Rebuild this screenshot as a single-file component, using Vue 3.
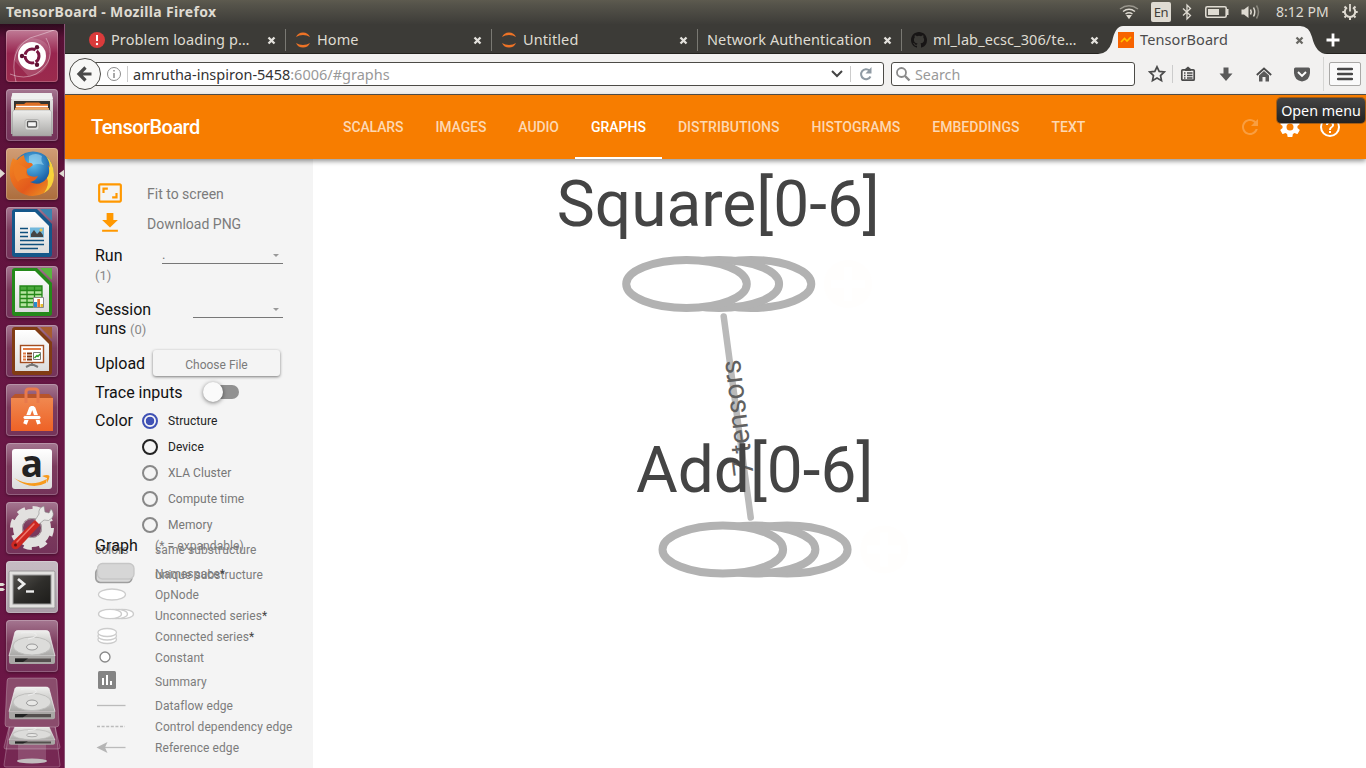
<script setup>
const tabs = [
  { label: 'Problem loading p…', icon: 'error', w: 207 },
  { label: 'Home', icon: 'jupyter', w: 206 },
  { label: 'Untitled', icon: 'jupyter', w: 206 },
  { label: 'Network Authentication', icon: '', w: 204 },
  { label: 'ml_lab_ecsc_306/te…', icon: 'github', w: 209 },
]
const nav = ['SCALARS', 'IMAGES', 'AUDIO', 'GRAPHS', 'DISTRIBUTIONS', 'HISTOGRAMS', 'EMBEDDINGS', 'TEXT']
const radios = [
  { label: 'Structure', state: 'on' },
  { label: 'Device', state: 'enabled' },
  { label: 'XLA Cluster', state: '' },
  { label: 'Compute time', state: '' },
  { label: 'Memory', state: '' },
]
const legend = [
  { label: 'Namespace', star: true, kind: 'ns' },
  { label: 'OpNode', kind: 'op' },
  { label: 'Unconnected series', star: true, kind: 'useries' },
  { label: 'Connected series', star: true, kind: 'cseries' },
  { label: 'Constant', kind: 'const' },
  { label: 'Summary', kind: 'summary' },
  { label: 'Dataflow edge', kind: 'flow' },
  { label: 'Control dependency edge', kind: 'control' },
  { label: 'Reference edge', kind: 'ref' },
]
const nodes = [
  { x: 686.5, y: 284 },
  { x: 722.8, y: 549.5 },
]
</script>

<template>
  <div class="desktop">
    <svg class="defs" width="0" height="0">
      <defs>
        <linearGradient id="silver" x1="0" y1="0" x2="0" y2="1"><stop offset="0" stop-color="#efefed" /><stop offset="1" stop-color="#a8a7a5" /></linearGradient>
        <linearGradient id="paper" x1="0" y1="0" x2="0" y2="1"><stop offset="0" stop-color="#fff" /><stop offset="1" stop-color="#dcdcdc" /></linearGradient>
        <linearGradient id="bag" x1="0" y1="0" x2="0" y2="1"><stop offset="0" stop-color="#f08850" /><stop offset="1" stop-color="#ee6226" /></linearGradient>
        <linearGradient id="fox" x1="0" y1="0" x2="1" y2="1"><stop offset="0" stop-color="#f48a22" /><stop offset=".6" stop-color="#e35a1c" /><stop offset="1" stop-color="#f0a125" /></linearGradient>
        <radialGradient id="globe" cx=".5" cy=".3" r=".7"><stop offset="0" stop-color="#5fc0ee" /><stop offset=".6" stop-color="#1f69ad" /><stop offset="1" stop-color="#123b78" /></radialGradient>
        <linearGradient id="term" x1="0" y1="0" x2="1" y2="1"><stop offset="0" stop-color="#55534f" /><stop offset=".5" stop-color="#2f2e2b" /><stop offset="1" stop-color="#1d1c1a" /></linearGradient>
        <g id="disk">
          <path d="M9 12Q9.500 10.500 12 10.500H40Q42.500 10.500 43 12L49 36H3Z" fill="url(#silver)" stroke="#f5f5f5" stroke-width=".7" />
          <path d="M3 36H49V42Q49 44 47 44H5Q3 44 3 42Z" fill="#a9a7a5" />
          <path d="M9 38.500H45V42H9Z" fill="#55504f" /><path d="M9 38.500H22L17 42H9Z" fill="#222" />
          <ellipse cx="26" cy="26" rx="19" ry="9" fill="#dcdcda" stroke="#bdbdbb" />
          <path d="M15 13Q25 11 30 14Q32 17 22 19" fill="none" stroke="#eee" />
          <ellipse cx="26" cy="27" rx="5.500" ry="3" fill="#e8e8e6" stroke="#999" />
        </g>
      </defs>
    </svg>

    <header class="panel">
      <span class="window-title">TensorBoard - Mozilla Firefox</span>
      <div class="indicators">
        <svg width="20" height="24" viewBox="0 0 20 24" fill="none" stroke="#dfdbd2" stroke-width="1.500">
          <path d="M1 9Q10 2.500 19 9" stroke="#99968d" /><path d="M4 11.500Q10 7 16 11.500M6.500 14Q10 11.500 13.500 14" /><path d="M8.500 15.800L10 18L11.500 15.800Z" fill="#dfdbd2" />
        </svg>
        <span class="lang">En</span>
        <svg class="bt" width="10" height="24" viewBox="0 0 10 24" fill="none" stroke="#dfdbd2" stroke-width="1.300"><path d="M1 8.500L8.500 15.500L5 19V5L8.500 8.500L1 15.500" /></svg>
        <svg class="bat" width="24" height="24" viewBox="0 0 24 24"><rect x=".8" y="6.800" width="20.400" height="10.400" rx="1.500" fill="none" stroke="#dfdbd2" stroke-width="1.600" /><path d="M3 9H14V15H3Z" fill="#dfdbd2" /><path d="M22 9H23.500V15H22Z" fill="#dfdbd2" /></svg>
        <svg class="vol" width="20" height="24" viewBox="0 0 20 24" fill="none" stroke="#dfdbd2" stroke-width="1.500"><path d="M.5 9.500H3L7.500 6V18L3 14.500H.5Z" fill="#dfdbd2" stroke="none" /><path d="M9.500 9.500Q11 12 9.500 14.500M12.500 7.500Q15 12 12.500 16.500" /><path d="M15.500 5.500Q19.500 12 15.500 18.500" stroke="#8a877e" /></svg>
        <span class="clock">8:12 PM</span>
        <svg class="cog" width="16" height="24" viewBox="0 0 16 24" fill="none" stroke="#dfdbd2"><path d="M5 7.500A5.200 5.200 0 1 0 11 7.500" stroke-width="2" /><path d="M8 4V11.500" stroke-width="1.800" /><path d="M.3 12H2.500M13.500 12H15.700M2.500 6.500L4 8M13.500 6.500L12 8M2.500 17.500L4 16M13.500 17.500L12 16M8 17.500V20" stroke-width="2" /></svg>
      </div>
    </header>

    <div class="work">
      <aside class="launcher">
        <div class="tile dash">
          <svg viewBox="0 0 52 52"><path d="M10 52Q2 20 24 8Q40 3 48 0M40 8Q52 30 30 44Q18 50 4 44" fill="none" stroke="#fff" stroke-opacity=".4" stroke-width="1" /><path d="M8 30Q8 12 26 8Q46 10 44 28Q40 46 22 46Z" fill="#fff" fill-opacity=".15" /><circle cx="26" cy="26" r="14" fill="#fff" /><circle cx="26" cy="26" r="7" fill="none" stroke="#7a1742" stroke-width="3" stroke-dasharray="13.160 1.500" stroke-dashoffset="6" /><circle cx="16" cy="26" r="2.200" fill="#5c1031" /><circle cx="31" cy="17.300" r="2.200" fill="#5c1031" /><circle cx="31" cy="34.700" r="2.200" fill="#5c1031" /></svg>
        </div>
        <div class="tile">
          <svg viewBox="0 0 52 52"><path d="M6.500 4H45.500L47 12V45H5V12Z" fill="url(#silver)" /><path d="M6.500 4H45.500L47 10H5Z" fill="#efefee" /><path d="M8 12H44V24H8Z" fill="#35342f" /><path d="M10 15H18L20 13.500H33L35 15H42V23H9Z" fill="#df7126" /><path d="M10 16.800H42V18.300H10Z" fill="#fff" /><path d="M9 19H43V22H9Z" fill="#edaa66" /><path d="M8 21H44L45.500 23V47H6.500V23Z" fill="url(#silver)" stroke="#999" stroke-width=".5" /><rect x="19" y="30.500" width="14" height="10.500" rx="2" fill="#e0e0de" stroke="#b4b4b2" /><rect x="21.500" y="32.500" width="9" height="5.500" rx="1" fill="#f5f5f5" stroke="#555" stroke-width="1.300" /></svg>
        </div>
        <div class="tile firefox">
          <svg viewBox="0 0 52 52"><circle cx="27" cy="24" r="20.500" fill="url(#globe)" /><path d="M23 8Q30 4 36 8Q34 13 38 17Q28 14 23 20Z" fill="#a2d8f2" opacity=".6" /><path d="M7 10Q9 12 11 12Q14 8 18 7Q18 12 22 15Q26 14 27 17Q24 20 21 21Q20 24 22 27Q27 30 32 28Q30 33 24 34Q34 39 41 30Q45 23 42 17Q45 19 47 24Q49 38 38 45Q25 52 12 43Q2 34 4 20Q5 14 7 10Z" fill="url(#fox)" /><path d="M40 8Q48 15 48 27Q48 39 38 45Q44 36 41 30Q44 26 43 20Q45 16 40 8Z" fill="#f8d33a" /><path d="M8 17Q12 14 21 21Q18 27 24 30Q14 30 12 34Q6 26 8 17Z" fill="#ef7c20" opacity=".8" /></svg>
        </div>
        <div class="tile">
          <svg viewBox="0 0 52 52"><path d="M9 2H31L46 17V47Q46 50 43 50H9Q6 50 6 47V5Q6 2 9 2Z" fill="#15578a" /><path d="M34 2H46V14Z" fill="#3b83ad" /><path d="M9 5H29L43 19V46H9Z" fill="url(#paper)" /><path d="M14 21.500H22M14 25.500H22M14 29.500H22M14 33.500H38M14 37.500H38M14 41.500H32" stroke="#0e4f7d" stroke-width="1.700" /><path d="M24 20.500H38V30.500H24Z" fill="#72b8dc" /><path d="M25 30V27L28 23L31 27L34 24L37 28V30Z" fill="#444" /><circle cx="35" cy="23" r="1.500" fill="#e9c34d" /></svg>
        </div>
        <div class="tile">
          <svg viewBox="0 0 52 52"><path d="M9 2H31L46 17V47Q46 50 43 50H9Q6 50 6 47V5Q6 2 9 2Z" fill="#25891a" /><path d="M34 2H46V14Z" fill="#59b53f" /><path d="M9 5H29L43 19V46H9Z" fill="url(#paper)" /><path d="M14 20H36V41H14Z" fill="#b6e4a0" /><path d="M14 20H36V24H14Z" fill="#4ba93c" /><path d="M14 20H36V41H14ZM21 20V41M28.500 20V41M14 24.500H36M14 28.500H36M14 32.500H36M14 36.500H36" fill="none" stroke="#248718" stroke-width="1.300" /><path d="M27.500 31.500H37.500V41.500H27.500Z" fill="#fff" stroke="#888" /><path d="M28 36H31V41H28Z" fill="#278cce" /><path d="M31.300 33H34V41H31.300Z" fill="#e9722f" /><path d="M34.500 38H37V41H34.500Z" fill="#e7be30" /></svg>
        </div>
        <div class="tile">
          <svg viewBox="0 0 52 52"><path d="M9 2H31L46 17V47Q46 50 43 50H9Q6 50 6 47V5Q6 2 9 2Z" fill="#813c14" /><path d="M34 2H46V14Z" fill="#a65c2f" /><path d="M9 5H29L43 19V46H9Z" fill="url(#paper)" /><rect x="14.500" y="20.500" width="23" height="17" fill="#fff" stroke="#a34d20" stroke-width="1.400" /><path d="M17 24H35" stroke="#e07b45" stroke-width="2" /><path d="M17 28.500H20M17 31.500H20M17 34.500H20" stroke="#e07b45" stroke-width="2" /><path d="M21 28.500H26M21 31.500H26M21 34.500H26" stroke="#7a3312" stroke-width="2" /><path d="M27.500 27.500H34.500V34.500H27.500Z" fill="#fff" stroke="#777" /><path d="M28.500 33L31 30.500L32 31.500L34 29" fill="none" stroke="#34a02d" stroke-width="1.500" /><path d="M26 38V41M20 42L26 39L32 42" fill="none" stroke="#777" stroke-width="2" /></svg>
        </div>
        <div class="tile">
          <svg viewBox="0 0 52 52"><path d="M5 14H47V47H5Z" fill="url(#bag)" /><path d="M5 14L9 10H43L47 14Z" fill="#b8542b" /><path d="M20 19V8Q20 5 23 5H29Q32 5 32 8V19" fill="none" stroke="#e8794c" stroke-width="3" /><path d="M19 40L25 24H27.500L33 40" fill="none" stroke="#fff" stroke-width="3.800" stroke-linejoin="bevel" /><rect x="17" y="31.500" width="18" height="4" rx="2" fill="#fff" stroke="#ed6b32" stroke-width=".8" /></svg>
        </div>
        <div class="tile">
          <svg viewBox="0 0 52 52"><rect x="6" y="6" width="40" height="40" rx="3" fill="url(#paper)" /><text class="amazon-a" x="26" y="33.500" text-anchor="middle">a</text><path d="M8 35Q25 45 41 36L40 40Q25 48 8 35Z" fill="#f79a1c" /><path d="M36 33Q42 31 43.500 33Q43.500 36 41 40Q41 37 41 35Q38 34 36 33Z" fill="#f79a1c" /></svg>
        </div>
        <div class="tile">
          <svg viewBox="0 0 52 52"><circle cx="26" cy="26" r="14.500" fill="none" stroke="#e2e1df" stroke-width="9" /><circle cx="26" cy="26" r="19.500" fill="none" stroke="#e2e1df" stroke-width="5" stroke-dasharray="8 7.310" /><circle cx="26" cy="26" r="9.500" fill="none" stroke="#aaa8a6" /><path d="M33 12Q32 6 38 4L39 10L43 11L45 7Q49 11 46 16Q43 20 38 18L32 23L28 20Z" fill="#e9e9e7" stroke="#888" stroke-width=".6" /><path d="M29 18L34 23L13.500 45Q10 49 6.500 46Q3.500 42.500 7.500 39Z" fill="#cd2822" /><path d="M28 22L11 40" stroke="#ee776c" stroke-width="1.600" stroke-linecap="round" /><circle cx="9.500" cy="43" r="1.500" fill="#5e1210" /></svg>
        </div>
        <div class="tile terminal">
          <svg viewBox="0 0 52 52"><rect x="3" y="10" width="46" height="37" rx="1.500" fill="#e2e1df" stroke="#989697" /><rect x="7" y="14" width="38" height="29" fill="url(#term)" stroke="#999" /><path d="M12 18L18 23L12 28" fill="none" stroke="#eee" stroke-width="2.800" /><path d="M20 30.500H28" stroke="#eee" stroke-width="2.400" /></svg>
        </div>
        <div class="tile"><svg viewBox="0 0 52 52"><use href="#disk" /></svg></div>
        <svg class="folded" viewBox="0 0 65 91" width="65" height="91">
          <path d="M10 47H55L60 88Q60 90 58 90H6Q4 90 4 88Z" fill="#fff" fill-opacity=".08" stroke="#fff" stroke-opacity=".25" /><path d="M18 66H46V83H18Z" fill="#fff" fill-opacity=".16" /><ellipse cx="32" cy="84" rx="15" ry="2.500" fill="#c2bcbe" />
          <path d="M10 46H54L60 70Q60 72 58 72H6Q4 72 4 70Z" fill="#fff" fill-opacity=".12" stroke="#fff" stroke-opacity=".25" />
          <g transform="translate(6 43) scale(1 .56)"><use href="#disk" /></g>
          <path d="M10 1H54Q57 1 57 4L59 47Q59 50 56 50H8Q5 50 5 47L7 4Q7 1 10 1Z" fill="#8a4c6c" stroke="#fff" stroke-opacity=".25" />
          <g transform="translate(6 0) scale(1 .96)"><use href="#disk" /></g>
        </svg>
        <svg class="marks" width="65" height="744" viewBox="0 24 65 744" fill="#dfdbd2"><path d="M0 169L5 173.500L0 178ZM65 169L59 173.500L65 178Z" /><path d="M0 583H3L5 584.500L3 586H0ZM0 588H3L5 589.500L3 591H0Z" /></svg>
      </aside>

      <section class="browser">
        <div class="tabstrip">
          <div v-for="t in tabs" :key="t.label" class="tab" :class="{ bare: !t.icon }" :style="{ width: t.w + 'px' }">
            <svg v-if="t.icon === 'error'" width="16" height="16" viewBox="0 0 16 16"><circle cx="8" cy="8" r="8" fill="#da3b3b" /><path d="M8 3V9" stroke="#fff" stroke-width="2" /><circle cx="8" cy="12" r="1.200" fill="#fff" /></svg>
            <svg v-if="t.icon === 'jupyter'" width="16" height="16" viewBox="0 0 16 16" fill="#ee7326"><path d="M1 5Q3 .5 8 .5T15 5Q12 3 8 3T1 5ZM1 11Q3 15.500 8 15.500T15 11Q12 13 8 13T1 11Z" /></svg>
            <svg v-if="t.icon === 'github'" width="16" height="16" viewBox="0 0 16 16" fill="#171515"><path d="M8 0C3.580 0 0 3.580 0 8c0 3.540 2.290 6.530 5.470 7.590.4.070.55-.17.55-.38 0-.19-.01-.82-.01-1.490-2.010.37-2.530-.49-2.690-.94-.09-.23-.48-.94-.82-1.130-.28-.15-.68-.52-.01-.53.63-.01 1.080.58 1.230.82.72 1.210 1.870.87 2.330.66.070-.52.28-.87.51-1.070-1.780-.2-3.640-.89-3.640-3.950 0-.87.31-1.590.82-2.150-.08-.2-.36-1.020.08-2.120 0 0 .67-.21 2.200.82a7.600 7.600 0 0 1 4 0c1.530-1.040 2.200-.82 2.200-.82.44 1.100.16 1.920.08 2.120.51.56.82 1.270.82 2.150 0 3.070-1.870 3.750-3.650 3.950.29.25.54.73.54 1.480 0 1.070-.01 1.930-.01 2.200 0 .21.15.46.55.38A8 8 0 0 0 16 8c0-4.420-3.580-8-8-8Z" /></svg>
            <span class="tab-label">{{ t.label }}</span>
            <svg class="x" width="9" height="9" viewBox="0 0 9 9"><path d="M1.500 1.500L7.500 7.500M7.500 1.500L1.500 7.500" stroke="#e4e2dd" stroke-width="2.300" /></svg>
          </div>
          <div class="active-tab">
            <svg class="tab-shape" width="236" height="30" viewBox="0 0 236 30"><path d="M0 30Q10 30 14 18Q17 2 25 2H202Q211 2 214 13Q218 30 229 30Z" fill="#f2f1f0" /></svg>
            <svg class="tb" width="16" height="16" viewBox="0 0 16 16"><path d="M0 0H16V16H0Z" fill="#f76300" /><path d="M3 10L6.500 6.500L9 9L13 5" fill="none" stroke="#ffc400" stroke-width="1.600" /></svg>
            <span class="tab-label">TensorBoard</span>
            <svg class="x" width="9" height="9" viewBox="0 0 9 9"><path d="M1.500 1.500L7.500 7.500M7.500 1.500L1.500 7.500" stroke="#696863" stroke-width="2.300" /></svg>
          </div>
          <svg class="plus" width="14" height="14" viewBox="0 0 14 14"><path d="M7 .5V13.500M.5 7H13.500" stroke="#fff" stroke-width="2.800" /></svg>
        </div>

        <div class="toolbar">
          <div class="urlbar">
            <svg class="back" width="34" height="34" viewBox="0 0 34 34"><circle cx="17" cy="17" r="15.500" fill="#f8f8f7" stroke="#4c4b47" /><path d="M23.500 17H12M17.500 10.500L11 17L17.500 23.500" fill="none" stroke="#4a4a4a" stroke-width="3.200" /></svg>
            <svg class="info" width="16" height="16" viewBox="0 0 16 16" fill="none" stroke="#8c8c8c"><circle cx="8" cy="8" r="6.500" /><path d="M8 4V5.500M8 7V12" stroke-width="1.500" /></svg>
            <i class="sep"></i>
            <span class="url">amrutha-inspiron-5458<b>:6006/#graphs</b></span>
            <svg class="caret" width="12" height="8" viewBox="0 0 12 8"><path d="M1 1L6 6L11 1" fill="none" stroke="#444" stroke-width="2" /></svg>
            <i class="sep"></i>
            <svg class="reload" width="14" height="14" viewBox="0 0 14 14"><path d="M11.500 9.500A5 5 0 1 1 10.500 3.500" fill="none" stroke="#8f9aa3" stroke-width="2" /><path d="M12.500 0V6.500H6.500Z" fill="#8f9aa3" /></svg>
          </div>
          <div class="search">
            <svg width="15" height="15" viewBox="0 0 15 15" fill="none" stroke="#8a8a8a"><circle cx="5.500" cy="5.500" r="4.500" stroke-width="1.800" /><path d="M9 9L13.500 13.500" stroke-width="2.400" /></svg>
            <span>Search</span>
          </div>
          <div class="tools">
            <svg width="18" height="18" viewBox="0 0 18 18"><path d="M9 1.800L11.200 6.400L16.300 7L12.500 10.500L13.500 15.700L9 13.100L4.500 15.700L5.500 10.500L1.700 7L6.800 6.400Z" fill="none" stroke="#4a4a4a" stroke-width="1.700" /></svg>
            <i class="sep"></i>
            <svg class="clip" width="16" height="16" viewBox="0 0 16 16"><rect x="1.800" y="3.800" width="12.400" height="10.400" rx="1" fill="none" stroke="#4a4a4a" stroke-width="1.700" /><path d="M5 3L8 .5L11 3V5H5Z" fill="#4a4a4a" /><path d="M4 7H5.500M4 9.500H5.500M4 12H5.500M7 7H12.500M7 9.500H12.500M7 12H12.500" stroke="#4a4a4a" stroke-width="1.300" /></svg>
            <svg class="down" width="14" height="15" viewBox="0 0 14 15"><path d="M4.500 .5H9.500V6.500H13.500L7 14L.5 6.500H4.500Z" fill="#5a5a5a" /></svg>
            <svg class="house" width="16" height="15" viewBox="0 0 16 15"><path d="M.8 8L8 1.500L15.200 8" fill="none" stroke="#4a4a4a" stroke-width="1.800" /><path d="M3 8.500L8 4L13 8.500V14.500H9.500V10H6.500V14.500H3Z" fill="#5a5a5a" /></svg>
            <svg class="pocket" width="16" height="15" viewBox="0 0 16 15"><path d="M1.500 .5H14.500Q16 .5 16 2V6Q15.500 13.500 8 14.500Q.5 13.500 0 6V2Q0 .5 1.500 .5Z" fill="#5a5a5a" /><path d="M4 5L8 9L12 5" fill="none" stroke="#fff" stroke-width="1.900" /></svg>
            <i class="divider"></i>
            <span class="menu"><svg width="16" height="14" viewBox="0 0 16 14"><path d="M1 2H15M1 7H15M1 12H15" stroke="#474747" stroke-width="2.400" stroke-linecap="round" /></svg></span>
          </div>
        </div>

        <main class="page">
          <header class="appbar">
            <h1>TensorBoard</h1>
            <nav><a v-for="n in nav" :key="n" :class="{ active: n === 'GRAPHS' }">{{ n }}</a></nav>
            <div class="actions">
              <svg class="dim" width="24" height="24" viewBox="0 0 24 24" fill="#fff"><path d="M17.650 6.350C16.200 4.900 14.210 4 12 4c-4.420 0-7.990 3.580-7.990 8s3.570 8 7.990 8c3.730 0 6.840-2.550 7.730-6h-2.080c-.82 2.330-3.040 4-5.650 4-3.310 0-6-2.690-6-6s2.690-6 6-6c1.660 0 3.140.69 4.220 1.780L13 11h7V4z" /></svg>
              <svg width="24" height="24" viewBox="0 0 24 24" fill="#fff"><path d="M19.430 12.980c.04-.32.07-.64.07-.98s-.03-.66-.07-.98l2.110-1.650c.19-.15.24-.42.12-.64l-2-3.460c-.12-.22-.39-.3-.61-.22l-2.490 1c-.52-.4-1.080-.73-1.690-.98l-.38-2.650C14.460 2.180 14.250 2 14 2h-4c-.25 0-.46.18-.49.42l-.38 2.650c-.61.25-1.170.59-1.690.98l-2.490-1c-.23-.09-.49 0-.61.22l-2 3.460c-.13.22-.07.49.12.64l2.110 1.650c-.04.32-.07.65-.07.98s.03.66.07.98l-2.110 1.650c-.19.15-.24.42-.12.64l2 3.460c.12.22.39.3.61.22l2.490-1c.52.4 1.080.73 1.690.98l.38 2.650c.03.24.24.42.49.42h4c.25 0 .46-.18.49-.42l.38-2.650c.61-.25 1.170-.59 1.690-.98l2.490 1c.23.09.49 0 .61-.22l2-3.460c.12-.22.07-.49-.12-.64zM12 15.500a3.500 3.500 0 1 1 0-7 3.500 3.500 0 0 1 0 7z" /></svg>
              <svg width="24" height="24" viewBox="0 0 24 24" fill="#fff"><path d="M11 18h2v-2h-2zM12 2a10 10 0 1 0 0 20 10 10 0 0 0 0-20zm0 18a8 8 0 1 1 0-16 8 8 0 0 1 0 16zm0-14a4 4 0 0 0-4 4h2c0-1.100.9-2 2-2s2 .9 2 2c0 2-3 1.750-3 5h2c0-2.250 3-2.500 3-5a4 4 0 0 0-4-4z" /></svg>
            </div>
            <span class="tooltip">Open menu</span>
          </header>

          <div class="content">
            <aside class="sidebar">
              <div class="action"><svg width="30" height="26" viewBox="0 0 24 24" fill="#ff9800"><path d="M19 12h-2v3h-3v2h5v-5zM7 9h3V7H5v5h2V9zm14-6H3c-1.100 0-2 .9-2 2v14c0 1.100.9 2 2 2h18c1.100 0 2-.9 2-2V5c0-1.100-.9-2-2-2zm0 16H3V5h18v14z" /></svg><span>Fit to screen</span></div>
              <div class="action"><svg width="30" height="30" viewBox="0 0 24 24" fill="#ff9800"><path d="M18.300 9.500h-3.600V4h-5.400v5.500h-3.600L12 15.500zM5.700 17.300v1.700h12.600v-1.700z" /></svg><span>Download PNG</span></div>
              <div class="field run"><div class="name">Run<small>(1)</small></div><div class="select">.<i></i></div></div>
              <div class="field session"><div class="name">Session<br>runs <small>(0)</small></div><div class="select"><i></i></div></div>
              <div class="field upload"><div class="name">Upload</div><button>Choose File</button></div>
              <div class="field trace"><div class="name">Trace inputs</div><span class="toggle"><i></i></span></div>
              <div class="color">
                <div class="name">Color</div>
                <div class="radios"><label v-for="r in radios" :key="r.label" :class="r.state"><i></i>{{ r.label }}</label></div>
              </div>
              <div class="legend">
                <div class="under">
                  <span>colors</span><span>same substructure</span>
                  <span></span><span>unique substructure</span>
                </div>
                <div class="legend-head"><span class="name">Graph</span><span class="hint">(* = expandable)</span></div>
                <div v-for="l in legend" :key="l.kind" class="legend-row" :class="l.kind">
                  <svg width="60" height="21" viewBox="0 0 60 21" fill="#fff" stroke="#ccc" stroke-width="1.300">
                    <template v-if="l.kind === 'ns'"><rect x=".8" y="5.500" width="36" height="14" rx="4.500" fill="#d9d9d9" stroke="#9e9e9e" stroke-width="1.700" /><rect x="2.500" y=".5" width="36.500" height="15.500" rx="5" fill="#d6d6d6" stroke="#c6c6c6" /></template>
                    <ellipse v-if="l.kind === 'op'" cx="17" cy="10.500" rx="13.500" ry="5.500" />
                    <template v-if="l.kind === 'useries'"><ellipse v-for="x in [27, 21, 15]" :key="x" :cx="x" cy="9" rx="11.500" ry="4.700" /></template>
                    <template v-if="l.kind === 'cseries'"><ellipse v-for="y in [13.500, 10, 6.500]" :key="y" cx="12.200" :cy="y" rx="9.300" ry="4" /></template>
                    <circle v-if="l.kind === 'const'" cx="10" cy="10" r="5" stroke="#888" />
                    <g v-if="l.kind === 'summary'" stroke="none"><rect x="3" y="0" width="18" height="18" rx="1.500" fill="#848484" /><path d="M7 7H9V14H7ZM11 4H13V14H11ZM15 10H17V14H15Z" /></g>
                    <path v-if="l.kind === 'flow'" d="M2 10.500H30.500" stroke="#bbb" />
                    <path v-if="l.kind === 'control'" d="M2 10.500H30" stroke="#bbb" stroke-dasharray="3 1.600" />
                    <template v-if="l.kind === 'ref'"><path d="M8 10.500H30.500" stroke="#bbb" /><path d="M1.500 10.500L12.500 5L10 10.500L12.500 16Z" fill="#b5b5b5" stroke="none" /></template>
                  </svg>
                  <span>{{ l.label }}<b v-if="l.star">*</b></span>
                </div>
              </div>
            </aside>

            <svg class="graph" width="1053" height="609" viewBox="313 159 1053 609">
              <g v-for="n in nodes" :key="n.x">
                <ellipse v-for="d in [64.500, 32.300, 0]" :key="d" :cx="n.x + d" :cy="n.y" rx="60.300" ry="24" fill="#fff" stroke="#b2b2b2" stroke-width="8" />
                <circle :cx="n.x + 161.500" :cy="n.y" r="24" fill="#fffefd" />
                <path :d="`M${n.x + 161.500} ${n.y - 17}v34m-17 -17h34`" stroke="#fff" stroke-width="8" />
              </g>
              <path d="M723.700 316.500L750.700 517.500" stroke="#bababa" stroke-width="6.500" stroke-linecap="round" />
              <text class="edge-label" transform="translate(753.500 474.500) rotate(-96.800)">7 tensors</text>
              <text class="node-label" x="718.300" y="225.500">Square[0-6]</text>
              <text class="node-label" x="754.700" y="491.500">Add[0-6]</text>
            </svg>
          </div>
        </main>
      </section>
    </div>
  </div>
</template>

<style>
body { margin: 0; overflow: hidden; }
</style>

<style scoped>
* { box-sizing: border-box; }
svg { display: block; flex: none; }
.defs { position: absolute; }
.desktop { width: 1366px; height: 768px; overflow: hidden; font-family: "Noto Sans", sans-serif; display: flex; flex-direction: column; }
.panel { height: 24px; flex: none; background: linear-gradient(#5d5a4f, #55534a 20%, #3d3c38); display: flex; align-items: center; justify-content: space-between; padding: 0 8px 0 6px; color: #dfdbd2; }
.window-title { font-weight: 700; font-size: 14px; letter-spacing: .32px; line-height: 20px; padding-bottom: 1px; }
.indicators { display: flex; align-items: center; font-size: 14px; }
.lang { width: 20px; height: 20px; background: #dfdbd2; color: #3f3e39; border-radius: 2px; margin-left: 12px; font-size: 13px; line-height: 21px; text-align: center; letter-spacing: -.5px; }
.bt { margin-left: 11px; } .bat { margin-left: 13px; } .vol { margin-left: 12px; }
.clock { margin-left: 15px; width: 53px; white-space: nowrap; letter-spacing: 0; padding-bottom: 1px; }
.cog { margin-left: 13px; }
.work { flex: 1; display: flex; min-height: 0; }
.launcher { position: relative; width: 65px; flex: none; height: 744px; overflow: hidden; padding: 6px 0 0 6px; background: linear-gradient(#2e0a1e 0, #591036 14px, #681745 50%, #6b1645); border-right: 1px solid #8c5477; display: flex; flex-direction: column; gap: 7px; }
.tile { width: 52px; height: 52px; flex: none; border-radius: 4px; background: linear-gradient(#a57791, #7c3b5d 45%, #74335a); box-shadow: inset 0 0 0 1px rgba(255, 255, 255, .22), 0 1px 3px rgba(0, 0, 0, .35); }
.dash { background: linear-gradient(#c07b96, #98254f 45%, #9b2b4d); }
.firefox { background: linear-gradient(#d19d75, #ac6d3d); }
.terminal { background: linear-gradient(#c6bbc3, #c0b5bc 40%, #a99ba6); }
.amazon-a { font: 700 37px "Open Sans", sans-serif; fill: #222; }
.folded { margin: -2px 0 0 -6px; }
.marks { position: absolute; left: 0; top: 0; }
.browser { flex: 1; min-width: 0; display: flex; flex-direction: column; }
.tabstrip { height: 30px; flex: none; background: #3c3b37; border-bottom: 1px solid #24231f; display: flex; padding-left: 14px; position: relative; }
.tab { display: flex; align-items: center; flex: none; height: 22px; margin-top: 5px; padding: 0 9px 0 10px; color: #dfdbd2; font-size: 14.500px; border-right: 1px solid #7a7973; }
.tab + .tab { padding-left: 9px; }
.tab:nth-child(5) { border: 0; padding-right: 12px; }
.tab-label { flex: 1; margin-left: 6px; white-space: nowrap; letter-spacing: .1px; line-height: 20px; padding-bottom: 2px; }
.tab .tab-label { width: 0; }
.bare .tab-label { margin-left: 1px; }
.tab.bare { padding-left: 8px; }
.active-tab { position: absolute; left: 1033px; top: 0; width: 236px; height: 30px; display: flex; align-items: center; padding: 2px 30px 0 20px; color: #4c4c4c; font-size: 14.500px; }
.tab-shape { position: absolute; left: 0; top: 0; }
.active-tab > :not(.tab-shape) { position: relative; }
.plus { margin: 9px 0 0 215px; }
.toolbar { height: 41px; flex: none; background: #f2f1f0; border-bottom: 1px solid #55534e; display: flex; align-items: center; padding: 0 5px; }
.urlbar { width: 799px; margin-left: 15px; height: 24px; background: #fff; border: 1px solid #4c4b47; border-radius: 0 3px 3px 0; display: flex; align-items: center; font-size: 14.500px; color: #333; }
.back { margin-left: -18px; }
.info { margin-left: 4px; }
.sep { width: 1px; height: 16px; background: #ccc; flex: none; margin-left: 5px; }
.url { margin-left: 5px; flex: 1; white-space: nowrap; }
.url b { font-weight: 400; color: #999; }
.urlbar .caret { margin-right: 2px; }
.reload { margin: 0 10px 0 8px; }
.search { width: 244px; height: 24px; margin-left: 7px; background: #fff; border: 1px solid #4c4b47; border-radius: 3px; display: flex; align-items: center; gap: 4px; padding-left: 4px; font-size: 14.300px; color: #999; }
.tools { display: flex; align-items: center; flex: 1; padding-left: 13px; }
.clip { margin-left: 7px; } .down { margin-left: 23px; } .house { margin-left: 23px; } .pocket { margin-left: 22px; }
.tools .sep { margin-left: 6px; height: 18px; }
.divider { width: 1px; height: 34px; background: #d6d6d4; margin-left: 13px; }
.menu { width: 32px; height: 24px; margin-left: 5px; flex: none; border: 1px solid #a9a8a6; border-radius: 2px; background: #fafafa; display: grid; place-items: center; }
.page { flex: 1; min-height: 0; display: flex; flex-direction: column; font-family: Roboto, sans-serif; background: #fff; }
.appbar { position: relative; z-index: 1; height: 64px; flex: none; background: #f77d00; box-shadow: 0 2px 5px rgba(0, 0, 0, .45); display: flex; color: #fff; }
h1 { margin: 0; width: 236px; padding-left: 26px; font-size: 20px; font-weight: 500; letter-spacing: -.55px; line-height: 64px; box-sizing: content-box; }
nav { display: flex; flex: 1; }
nav a { padding: 0 16px; font-size: 14px; font-weight: 500; line-height: 64px; color: #fdd8b3; letter-spacing: .01px; }
nav a:nth-child(-n+3) { letter-spacing: -.1px; }
nav a.active { color: #fff; box-shadow: inset 0 -2px #fff; }
.actions { display: flex; align-items: center; gap: 16px; padding-right: 24px; }
.dim { opacity: .25; }
.tooltip { position: absolute; right: 1px; top: 3px; width: 88px; height: 25px; border-radius: 4px; background: linear-gradient(#444, #222); box-shadow: 0 0 0 1px rgba(80, 60, 40, .5); font: 14.300px/25px "Noto Sans", sans-serif; text-align: center; white-space: nowrap; }
.content { flex: 1; min-height: 0; display: flex; }
.sidebar { width: 248px; flex: none; background: #f4f4f4; padding: 19px 0 0 30px; color: #111; font-size: 16px; }
.action { display: flex; align-items: center; height: 30px; font-size: 14px; color: #7b7b7b; }
.action span { margin-left: 22px; padding-top: 2px; }
.field { display: flex; line-height: 19px; }
small { font-size: 13px; color: #888; }
.run { height: 54px; padding-top: 8px; } .run small { display: block; line-height: 21px; }
.run .name { width: 67px; }
.select { width: 121px; height: 18px; border-bottom: 1px solid #777; display: flex; justify-content: space-between; align-items: center; font-size: 13px; color: #777; }
.select i { margin: 2px 4px 0 auto; border: 3.500px solid transparent; border-top-color: #999; border-bottom: 0; }
.session { height: 54px; padding-top: 8px; } .session .name { width: 98px; } .session .select { width: 90px; }
.session .name { letter-spacing: -.05px; }
.upload { height: 33px; align-items: center; }
.upload .name { width: 58px; padding-top: 1px; }
button { width: 127px; height: 26px; border: 0; padding: 5px 0 0; border-radius: 3px; background: #f4f4f4; box-shadow: 0 1px 3px rgba(0, 0, 0, .5); font: 12px Roboto, sans-serif; color: #7b7b7b; }
.trace { height: 26px; align-items: center; }
.toggle { margin-left: 22px; width: 34px; height: 14px; background: #919191; border-radius: 7px; display: flex; align-items: center; }
.toggle i { width: 20px; height: 20px; flex: none; margin-left: -2px; border-radius: 50%; background: #fafafa; box-shadow: 0 1px 4px rgba(0, 0, 0, .5); }
.color { display: flex; height: 132px; padding-top: 3px; }
.color .name { width: 47px; line-height: 25px; }
label { display: flex; align-items: center; gap: 10px; height: 26px; font-size: 12px; letter-spacing: .05px; color: #777; }
label i { width: 16px; height: 16px; border: 2px solid #888; border-radius: 50%; }
label.enabled, label.on { color: #222; } label.enabled i { border-color: #222; }
label.on i { border-color: #3f51b5; background: radial-gradient(#3f51b5 4px, transparent 4.600px); }
.legend { position: relative; font-size: 12px; letter-spacing: .08px; color: #7c7c7c; }
.under { position: absolute; top: 5px; left: 0; display: grid; grid-template-columns: 60px 150px; grid-template-rows: 25px 25px; line-height: 16px; }
.legend-head { display: grid; grid-template-columns: 60px 150px; height: 26px; line-height: 17px; position: relative; }
.legend-head .name { font-size: 16px; color: #111; }
.hint { padding-top: 1px; }
.legend-row { display: flex; align-items: center; height: 21px; position: relative; white-space: nowrap; }
.legend-row svg { overflow: visible; }
.legend-row b { font-weight: 400; color: #444; }
.legend-row.summary { height: 27px; }
.graph text { font-family: Roboto, sans-serif; }
.node-label { font-size: 64px; fill: #444; text-anchor: middle; }
.edge-label { font-size: 28px; fill: #606060; }
</style>
